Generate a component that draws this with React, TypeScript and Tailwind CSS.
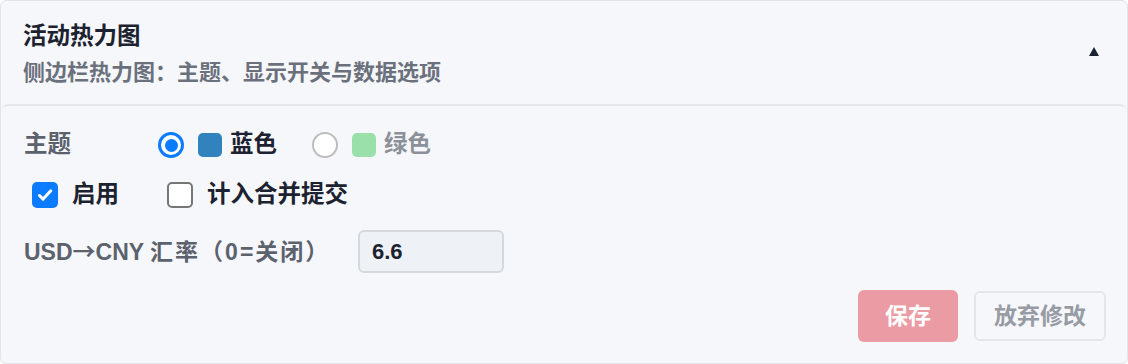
import { useState } from 'react';

// 主题选项
type Theme = 'blue' | 'green';

const FONT = { fontFamily: '"Liberation Sans", "Noto Sans CJK SC", sans-serif' };
const ARROW = { fontFamily: '"Noto Sans CJK SC", sans-serif' };

function Radio({ checked }: { checked: boolean }) {
  return checked ? (
    <span className="flex h-[26px] w-[26px] items-center justify-center rounded-full border-[3px] border-[#0b7bff] bg-white">
      <span className="h-[13px] w-[13px] rounded-full bg-[#0b7bff]" />
    </span>
  ) : (
    <span className="h-[26px] w-[26px] rounded-full border-2 border-[#bdbdbd] bg-white" />
  );
}

function Checkbox({ checked }: { checked: boolean }) {
  return checked ? (
    <span className="flex h-[26px] w-[26px] items-center justify-center rounded-[5px] bg-[#0b7bff]">
      <svg width="18" height="18" viewBox="0 0 18 18" fill="none">
        <path d="M3.5 9.5l3.6 3.6L14.8 4.8" stroke="white" strokeWidth="3" strokeLinecap="round" strokeLinejoin="round" />
      </svg>
    </span>
  ) : (
    <span className="h-[26px] w-[26px] rounded-[5px] border-2 border-[#767676] bg-white" />
  );
}

export default function App() {
  const [theme, setTheme] = useState<Theme>('blue');
  const [enabled, setEnabled] = useState(true);
  const [countMerge, setCountMerge] = useState(false);
  const [rate, setRate] = useState('6.6');

  return (
    <div style={FONT} className="h-[364px] w-[1128px] bg-white">
      <div className="flex h-full flex-col rounded-md border border-[#e2e4e9] bg-[#f6f7fb]">
        {/* 标题区 */}
        <div className="flex h-[103px] items-center justify-between pl-[22px] pr-[28px] pt-[4px]">
          <div className="flex flex-col gap-[6px]">
            <div className="flex h-[30px] items-center text-[23.5px] font-bold text-[#1c2230]">活动热力图</div>
            <div className="flex h-[30px] items-center text-[22px] font-semibold text-[#6b717c]">
              侧边栏热力图：主题、显示开关与数据选项
            </div>
          </div>
          <svg width="10" height="9" viewBox="0 0 10 9" className="mt-[-6px]">
            <polygon points="5,0 10,9 0,9" fill="#1c2230" />
          </svg>
        </div>

        {/* 内容区 */}
        <div className="mx-[1px] flex flex-1 flex-col rounded-t-md border-t-2 border-[#e4e6eb] pl-[22px] pr-[20px] pt-[24px]">
          <div className="flex h-[30px] items-center">
            <span className="w-[134px] text-[23.5px] font-semibold text-[#5c626d]">主题</span>
            <button className="flex items-center" onClick={() => setTheme('blue')}>
              <Radio checked={theme === 'blue'} />
              <span className="ml-[14px] h-[24px] w-[24px] rounded-[5px] bg-[#3182bd]" />
              <span className="ml-[8px] text-[23.5px] font-bold text-[#1c2230]">蓝色</span>
            </button>
            <button className="ml-[35px] flex items-center" onClick={() => setTheme('green')}>
              <Radio checked={theme === 'green'} />
              <span className="ml-[14px] h-[24px] w-[24px] rounded-[5px] bg-[#9ae0ab]" />
              <span className="ml-[8px] text-[23.5px] font-bold text-[#8c9099]">绿色</span>
            </button>
          </div>

          <div className="mt-[20px] flex h-[30px] items-center pl-[8px]">
            <button className="flex items-center" onClick={() => setEnabled(!enabled)}>
              <Checkbox checked={enabled} />
              <span className="ml-[14px] text-[23.5px] font-bold text-[#1c2230]">启用</span>
            </button>
            <button className="ml-[48px] flex items-center" onClick={() => setCountMerge(!countMerge)}>
              <Checkbox checked={countMerge} />
              <span className="ml-[14px] text-[23.5px] font-bold text-[#1c2230]">计入合并提交</span>
            </button>
          </div>

          <div className="mt-[20px] flex items-center">
            <span className="w-[334px] text-[23px] font-bold text-[#5c626d]">
              USD<span style={ARROW}>→</span>CNY <span className="tracking-[2px]">汇率（0=关闭）</span>
            </span>
            <input
              value={rate}
              onChange={(e) => setRate(e.target.value)}
              className="h-[43px] w-[146px] rounded-md border-2 border-[#d5d8dd] bg-[#eef1f5] px-[12px] text-[22px] font-bold text-[#1c2230] outline-none"
            />
          </div>

          <div className="mt-[17px] flex justify-end gap-[16px]">
            <button
              disabled
              className="h-[52px] w-[100px] rounded-md bg-[#eb9ba3] text-[23px] font-bold text-white"
            >
              保存
            </button>
            <button
              disabled
              className="mt-[1px] h-[50px] w-[132px] rounded-md border-2 border-[#e3e5ea] bg-[#f6f7fb] text-[23px] font-bold text-[#979ba3]"
            >
              放弃修改
            </button>
          </div>
        </div>
      </div>
    </div>
  );
}
